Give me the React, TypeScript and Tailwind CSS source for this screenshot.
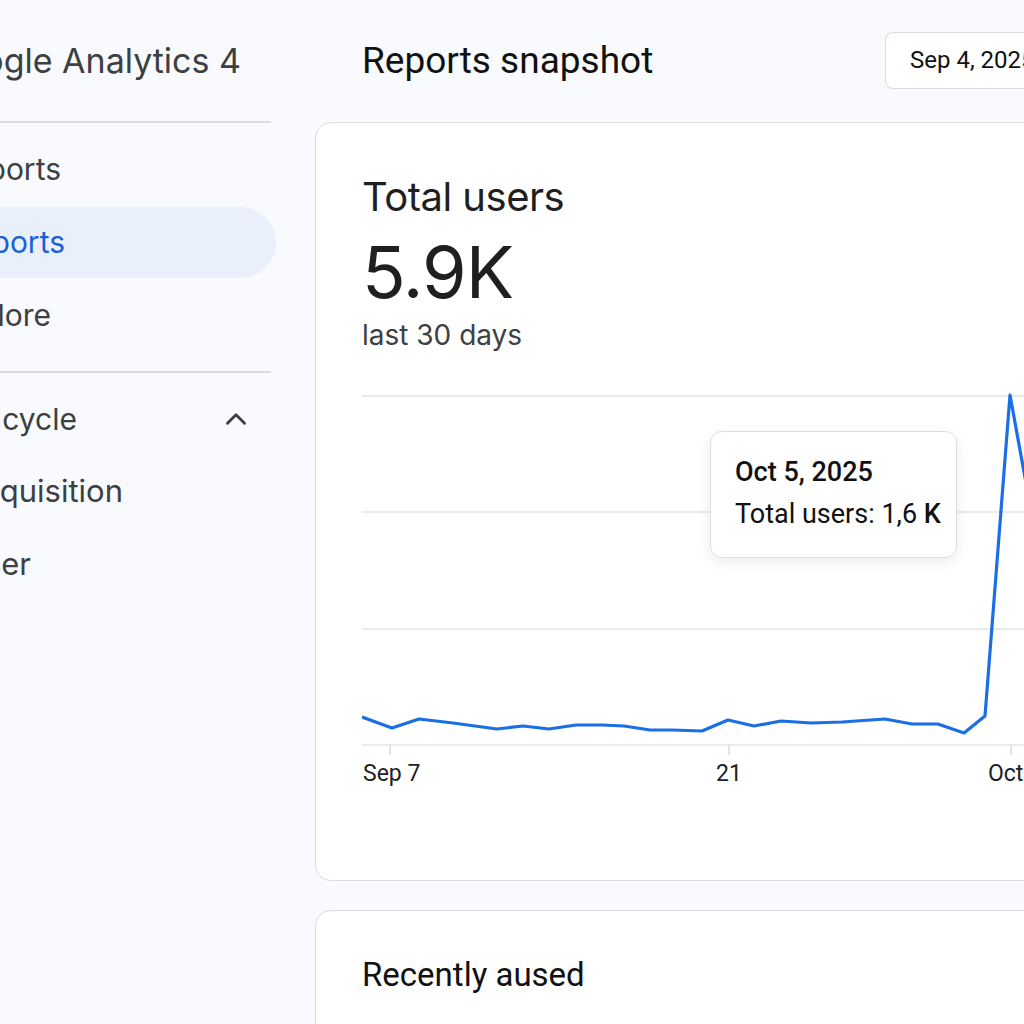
import { ChevronUp } from 'lucide-react'

const points: [number, number][] = [
  [362, 717], [392, 728], [419, 719], [453, 723], [497, 729], [523, 726],
  [549, 729], [576, 725], [602, 725], [624, 726], [650, 730], [672, 730],
  [702, 731], [728, 720], [754, 726], [781, 721], [811, 723], [842, 722],
  [885, 719], [912, 724], [938, 724], [964, 733], [985, 716], [1010, 395],
  [1040, 560],
]

// chart svg sits at x=362, y=380 of the page
const path = points.map(([x, y], i) => `${i ? 'L' : 'M'}${x - 362} ${y - 380}`).join(' ')

const navTop = [
  { label: 'Reports', end: 'w-[61px]' },
  { label: 'Reports', end: 'w-[65px]', active: true },
  { label: 'Explore', end: 'w-[51px]' },
]

const navBottom = [
  { label: 'Acquisition', end: 'w-[123px]' },
  { label: 'User', end: 'w-[31px]' },
]

function Sidebar() {
  return (
    <aside className="w-[280px] shrink-0 overflow-hidden font-['Inter',sans-serif] text-[#3c4043]">
      <div className="h-[121px] flex items-center">
        <div className="w-[241px] flex justify-end overflow-hidden whitespace-nowrap text-[34px]">
          Google Analytics 4
        </div>
      </div>
      <div className="w-[271px] h-[2px] bg-[#dadce0]" />
      <div className="pt-[11px] pb-[20px] flex flex-col gap-[2px]">
        {navTop.map((item, i) => (
          <div
            key={i}
            className={`h-[71px] w-[276px] flex items-center rounded-r-full ${item.active ? 'bg-[#e9f0fc] text-[#1a62d2]' : ''}`}
          >
            <div className={`${item.end} flex justify-end overflow-hidden whitespace-nowrap text-[30px]`}>
              {item.label}
            </div>
          </div>
        ))}
      </div>
      <div className="w-[271px] h-[2px] bg-[#dadce0]" />
      <div className="pt-[11px] flex flex-col gap-[1px]">
        <div className="h-[70px] w-[271px] flex items-center justify-between pr-[18px]">
          <div className="w-[77px] flex justify-end overflow-hidden whitespace-nowrap text-[30px]">Life cycle</div>
          <ChevronUp className="w-[34px] h-[34px]" strokeWidth={2} />
        </div>
        {navBottom.map((item, i) => (
          <div key={i} className="h-[72px] flex items-center">
            <div className={`${item.end} flex justify-end overflow-hidden whitespace-nowrap text-[31px]`}>
              {item.label}
            </div>
          </div>
        ))}
      </div>
    </aside>
  )
}

function UsersChart() {
  return (
    <div className="relative w-[700px] h-[420px]">
      <svg width="700" height="420" className="block">
        {[16, 132, 249, 365].map((y) => (
          <line key={y} x1="0" x2="700" y1={y} y2={y} stroke="#e3e5e8" strokeWidth="1.5" />
        ))}
        {[28, 367, 649].map((x) => (
          <line key={x} x1={x} x2={x} y1="365" y2="375" stroke="#d7d9dc" strokeWidth="1.5" />
        ))}
        <path d={path} fill="none" stroke="#1a6ee6" strokeWidth="3.2" strokeLinejoin="round" />
        <g fontFamily="Roboto, sans-serif" fontSize="23" fill="#202124">
          <text x="1" y="401">Sep 7</text>
          <text x="354" y="401">21</text>
          <text x="626" y="401">Oct</text>
        </g>
      </svg>
      <div className="absolute left-[348px] top-[51px] w-[247px] h-[127px] rounded-[12px] border border-[#dcdee1] bg-white shadow-[0_4px_14px_rgba(0,0,0,0.08)] pl-[24px] pt-[21px] font-['Roboto',sans-serif] text-[#111]">
        <div className="text-[27px] font-medium leading-[38px]">Oct 5, 2025</div>
        <div className="text-[27px] leading-[38px] mt-[4px]">
          Total users: 1,6 <span className="font-medium">K</span>
        </div>
      </div>
    </div>
  )
}

export default function App() {
  return (
    <div className="w-[1024px] h-[1024px] overflow-hidden bg-[#f8fafd] flex">
      <Sidebar />
      <main className="flex-1 min-w-0 pl-[35px]">
        <header className="h-[122px] flex items-center justify-between">
          <h1 className="ml-[47px] font-['Roboto',sans-serif] text-[37px] text-[#111] whitespace-nowrap">
            Reports snapshot
          </h1>
          <div className="mb-[2px] h-[57px] w-[160px] shrink-0 mr-[-21px] rounded-l-[8px] border border-r-0 border-[#dadce0] bg-white flex items-center pl-[24px] overflow-hidden whitespace-nowrap font-['Roboto',sans-serif] text-[24px] text-[#111]">
            Sep 4, 2025 – Oct 3, 2025
          </div>
        </header>
        <section className="w-[760px] h-[759px] rounded-[16px] border border-[#dadce0] bg-white pl-[46px] pt-[50px] overflow-hidden">
          <div className="font-['Inter',sans-serif] text-[40px] leading-[48px] text-[#1f1f1f] tracking-[-0.5px]">Total users</div>
          <div className="mt-[15px] font-['Inter',sans-serif] text-[72px] leading-[72px] text-[#1f1f1f] tracking-[-1px]">5.9K</div>
          <div className="mt-[11px] font-['Inter',sans-serif] text-[28px] leading-[32px] text-[#3c4043]">last 30 days</div>
          <div className="mt-[29px]">
            <UsersChart />
          </div>
        </section>
        <section className="mt-[29px] w-[760px] h-[200px] rounded-[16px] border border-[#dadce0] bg-white pl-[46px] pt-[44px]">
          <div className="font-['Roboto',sans-serif] text-[33px] leading-[40px] text-[#111]">Recently aused</div>
        </section>
      </main>
    </div>
  )
}
